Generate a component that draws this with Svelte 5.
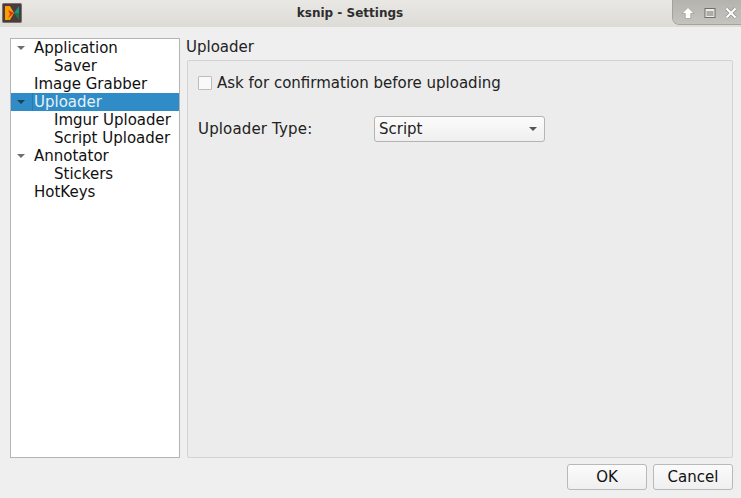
<script>
  const tree = [
    { label: 'Application', depth: 0, arrow: true },
    { label: 'Saver', depth: 1 },
    { label: 'Image Grabber', depth: 0 },
    { label: 'Uploader', depth: 0, arrow: true, selected: true },
    { label: 'Imgur Uploader', depth: 1 },
    { label: 'Script Uploader', depth: 1 },
    { label: 'Annotator', depth: 0, arrow: true },
    { label: 'Stickers', depth: 1 },
    { label: 'HotKeys', depth: 0 }
  ];
</script>

<div class="window">
  <header class="titlebar">
    <svg class="logo" width="20" height="20" viewBox="0 0 20 20" aria-hidden="true">
      <rect x="0.5" y="0.5" width="19" height="19" rx="1" fill="#4b3b3e" stroke="#77706c" />
      <path d="M3 3h5l4 7-4 7H3z" fill="#f6a100" />
      <path d="M6 7l6 3-6 5 2-4z" fill="#e2301f" />
      <path d="M17 3v7h-5z" fill="#0f9a8c" />
      <path d="M17 17v-7h-5z" fill="#1c7a45" />
    </svg>
    <span class="title">ksnip - Settings</span>
    <div class="controls">
      <svg width="14" height="14" viewBox="0 0 14 14" aria-hidden="true">
        <path d="M7 1.5L13 7.5H9.7v5H4.3v-5H1z" fill="#fff" stroke="#8f8f8a" stroke-width="0.6" />
      </svg>
      <svg width="12" height="12" viewBox="0 0 12 12" aria-hidden="true">
        <rect x="1" y="1.5" width="10" height="9" fill="#ecebe8" stroke="#6f6f69" stroke-width="1" />
        <rect x="2.5" y="4" width="7" height="5" fill="#aeada8" />
      </svg>
      <svg width="12" height="12" viewBox="0 0 12 12" aria-hidden="true">
        <path d="M1.5 1.5l9 9M10.5 1.5l-9 9" stroke="#8f8f8a" stroke-width="3.6" />
        <path d="M1.5 1.5l9 9M10.5 1.5l-9 9" stroke="#fff" stroke-width="2.2" />
      </svg>
    </div>
  </header>

  <div class="body">
    <div class="main">
      <ul class="tree">
        {#each tree as item}
          <li class="row" class:selected={item.selected} class:child={item.depth === 1}>
            {#if item.arrow}<span class="arrow"></span>{/if}
            <span class="label">{item.label}</span>
          </li>
        {/each}
      </ul>

      <section class="page">
        <h2>Uploader</h2>
        <div class="panel">
          <label class="check">
            <span class="box"></span>
            Ask for confirmation before uploading
          </label>
          <div class="field">
            <span class="field-label">Uploader Type:</span>
            <div class="combo">
              <span>Script</span>
              <span class="combo-arrow"></span>
            </div>
          </div>
        </div>
      </section>
    </div>

    <footer class="buttons">
      <button type="button">OK</button>
      <button type="button">Cancel</button>
    </footer>
  </div>
</div>

<style>
  :global(body) {
    margin: 0;
    background: #efefef;
  }

  .window {
    width: 741px;
    height: 498px;
    display: flex;
    flex-direction: column;
    overflow: hidden;
    font-family: "DejaVu Sans", sans-serif;
    font-size: 15px;
    color: #111;
    background: #efefef;
  }

  .titlebar {
    height: 27px;
    flex-shrink: 0;
    display: flex;
    align-items: center;
    position: relative;
    box-sizing: border-box;
    padding-left: 2px;
    padding-bottom: 1px;
    background: linear-gradient(#e9e8e4, #dcdbd6);
  }

  .logo {
    flex-shrink: 0;
  }

  .title {
    position: absolute;
    left: 0;
    right: 41px;
    top: 5px;
    text-align: center;
    font-size: 12px;
    font-weight: bold;
    line-height: 16px;
    color: #2e2e2e;
  }

  .controls {
    position: absolute;
    top: 0;
    right: 0;
    width: 68px;
    height: 24px;
    box-sizing: border-box;
    padding: 2px 4px 0 8px;
    display: flex;
    align-items: center;
    justify-content: space-between;
    background: linear-gradient(#b4b3ae, #c4c3be);
    border-bottom-left-radius: 6px;
    box-shadow: -1px 0 0 #a3a29d, 0 1px 0 #a3a29d;
  }

  .body {
    flex: 1;
    min-height: 0;
    display: flex;
    flex-direction: column;
    padding: 11px 8px 8px 10px;
    gap: 6px;
  }

  .main {
    flex: 1;
    min-height: 0;
    display: flex;
    gap: 7px;
  }

  .tree {
    width: 170px;
    box-sizing: border-box;
    flex-shrink: 0;
    margin: 0;
    padding: 0;
    list-style: none;
    background: #fff;
    border: 1px solid #b4b4b4;
  }

  .row {
    position: relative;
    height: 18px;
    line-height: 18px;
    padding-left: 23px;
    white-space: nowrap;
  }

  .row.child {
    padding-left: 43px;
  }

  .row.selected {
    background: #308cc6;
    color: #e6f1f8;
  }

  .row.selected::before {
    content: "";
    position: absolute;
    left: 21px;
    top: 0;
    bottom: 0;
    width: 1px;
    background: #2a7cb0;
  }

  .arrow {
    position: absolute;
    left: 6px;
    top: 7px;
    width: 0;
    height: 0;
    border-left: 4px solid transparent;
    border-right: 4px solid transparent;
    border-top: 4px solid #6e6e6e;
  }

  .selected .arrow {
    border-top-color: #1d3f57;
  }

  .page {
    flex: 1;
    min-width: 0;
    display: flex;
    flex-direction: column;
  }

  h2 {
    margin: 0 0 0 -1px;
    font-size: 15px;
    font-weight: normal;
    line-height: 18px;
    height: 22px;
    color: #222;
  }

  .panel {
    flex: 1;
    box-sizing: border-box;
    padding: 13px 10px;
    background: #ececec;
    border: 1px solid #d3d3d3;
    border-radius: 2px;
  }

  .check {
    display: flex;
    align-items: center;
    gap: 5px;
    height: 18px;
    line-height: 18px;
    color: #222;
  }

  .box {
    width: 12px;
    height: 12px;
    background: #f9f9f9;
    border: 1px solid #bdbdbd;
    border-radius: 1px;
  }

  .field {
    display: flex;
    align-items: center;
    margin-top: 24px;
    color: #222;
  }

  .field-label {
    width: 176px;
    flex-shrink: 0;
    letter-spacing: 0.15px;
  }

  .combo {
    width: 171px;
    height: 26px;
    box-sizing: border-box;
    padding: 0 7px 0 4px;
    display: flex;
    align-items: center;
    justify-content: space-between;
    background: linear-gradient(#fbfbfb, #efefef);
    border: 1px solid #b4b4b4;
    border-radius: 3px;
  }

  .combo-arrow {
    width: 0;
    height: 0;
    border-left: 4px solid transparent;
    border-right: 4px solid transparent;
    border-top: 4px solid #555;
  }

  .buttons {
    flex-shrink: 0;
    display: flex;
    justify-content: flex-end;
    gap: 6px;
  }

  button {
    width: 80px;
    height: 26px;
    padding: 0;
    font: inherit;
    color: #111;
    background: linear-gradient(#fbfbfb, #efefef);
    border: 1px solid #b9b9b9;
    border-radius: 3px;
  }
</style>
